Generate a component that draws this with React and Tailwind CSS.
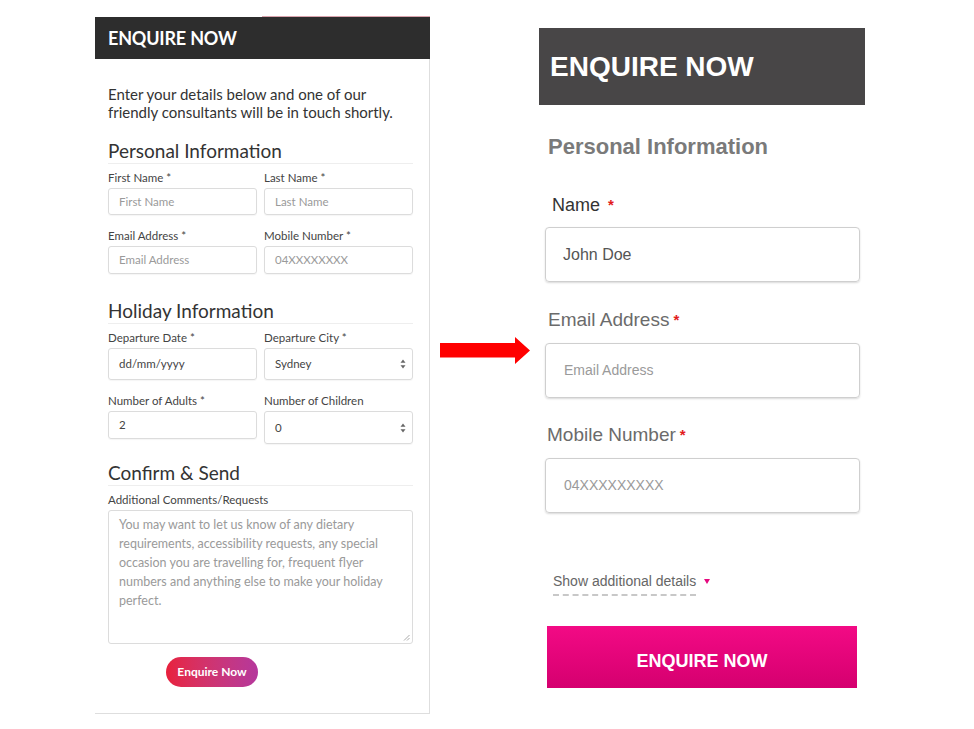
import React from "react";

const LEFT_FONT = { fontFamily: "Lato, 'Open Sans', sans-serif" };
const RIGHT_FONT = { fontFamily: "'Liberation Sans', Arial, sans-serif" };

function Caret() {
  return (
    <svg width="6" height="10" viewBox="0 0 6 10" className="shrink-0">
      <path d="M3 0.5 L5.5 3.8 H0.5 Z" fill="#666" />
      <path d="M3 9.5 L5.5 6.2 H0.5 Z" fill="#666" />
    </svg>
  );
}

function SmallField({ label, value, muted = true, select = false, h = "h-[27px]" }) {
  return (
    <div className="flex flex-col">
      <span className="text-[11.5px] leading-[14px] text-[#444]">{label}</span>
      <div
        className={`mt-[3px] ${h} flex items-center justify-between rounded-[3px] border border-[#dcdcdc] pl-[10px] pr-[6px] text-[11.5px] shadow-[0_1px_1px_rgba(0,0,0,0.04)] ${
          muted ? "text-[#9a9a9a]" : "text-[#444]"
        }`}
      >
        <span>{value}</span>
        {select && <Caret />}
      </div>
    </div>
  );
}

function SectionHeading({ children }) {
  return (
    <div className="border-b border-[#eeeeee] pb-[1px]">
      <h2 className="text-[19px] leading-[22px] text-[#333]">{children}</h2>
    </div>
  );
}

function LeftForm() {
  return (
    <div className="w-[335px] shrink-0 flex flex-col" style={LEFT_FONT}>
      <div className="flex h-px">
        <div className="w-[167px]" />
        <div className="flex-1 bg-[#d9a3ad]" />
      </div>
      <div className="h-[42px] bg-[#2d2d2d] flex items-center pl-[13px]">
        <span className="text-[18px] font-bold text-white tracking-[-0.2px]">ENQUIRE NOW</span>
      </div>
      <div className="border-r border-b border-[#dedede] pl-[13px] pr-[16px] pt-[26px] pb-[26px] flex flex-col">
        <p className="text-[15px] leading-[18px] text-[#333]">
          Enter your details below and one of our
          <br />
          friendly consultants will be in touch shortly.
        </p>

        <div className="mt-[19px]">
          <SectionHeading>Personal Information</SectionHeading>
        </div>
        <div className="mt-[7px] grid grid-cols-2 gap-x-[7px]">
          <SmallField label="First Name *" value="First Name" />
          <SmallField label="Last Name *" value="Last Name" />
        </div>
        <div className="mt-[14px] grid grid-cols-2 gap-x-[7px]">
          <SmallField label="Email Address *" value="Email Address" h="h-[28px]" />
          <SmallField label="Mobile Number *" value="04XXXXXXXX" h="h-[28px]" />
        </div>

        <div className="mt-[26px]">
          <SectionHeading>Holiday Information</SectionHeading>
        </div>
        <div className="mt-[7px] grid grid-cols-2 gap-x-[7px]">
          <SmallField label="Departure Date *" value="dd/mm/yyyy" muted={false} h="h-[32px]" />
          <SmallField label="Departure City *" value="Sydney" muted={false} select h="h-[32px]" />
        </div>
        <div className="mt-[14px] grid grid-cols-2 gap-x-[7px] items-start">
          <SmallField label="Number of Adults *" value="2" muted={false} h="h-[28px]" />
          <SmallField label="Number of Children" value="0" muted={false} select h="h-[33px]" />
        </div>

        <div className="mt-[18px]">
          <SectionHeading>Confirm &amp; Send</SectionHeading>
        </div>
        <span className="mt-[7px] text-[11.5px] leading-[14px] text-[#444]">Additional Comments/Requests</span>
        <div className="relative mt-[3px] h-[134px] rounded-[3px] border border-[#dcdcdc] px-[10px] pt-[4px] text-[12.5px] leading-[19px] text-[#9a9a9a]">
          You may want to let us know of any dietary requirements, accessibility requests, any special occasion you are
          travelling for, frequent flyer numbers and anything else to make your holiday perfect.
          <svg width="7" height="7" viewBox="0 0 7 7" className="absolute right-[2px] bottom-[2px]">
            <path d="M6.5 1 L1 6.5 M6.5 4 L4 6.5" stroke="#aaa" strokeWidth="1" />
          </svg>
        </div>
        <button className="mt-[13px] ml-[58px] h-[30px] w-[92px] rounded-full bg-gradient-to-r from-[#e8203c] to-[#b5379c] text-[12px] font-bold text-white">
          Enquire Now
        </button>
      </div>
    </div>
  );
}

function Arrow() {
  return (
    <svg width="90" height="28" viewBox="0 0 90 28" className="mt-[321px] ml-[10px] shrink-0">
      <path d="M0 6 H75 V0 L90 13.5 L75 27 V20.5 H0 Z" fill="#ff0000" />
    </svg>
  );
}

function BigField({ label, value, labelClass, mt }) {
  return (
    <div className={`flex flex-col ${mt}`}>
      <span className={labelClass}>
        {label}
        <span className="text-[#e21b1b] text-[15px] font-bold align-top ml-[4px]">*</span>
      </span>
      <div className="ml-[6px] w-[315px] h-[55px] flex items-center rounded-[4px] border border-[#cfcfcf] shadow-[0_1px_2px_rgba(0,0,0,0.15)] pl-[18px] text-[14px] text-[#9a9a9a]">
        {value}
      </div>
    </div>
  );
}

function RightForm() {
  return (
    <div className="w-[326px] shrink-0 mt-[12px] ml-[9px] flex flex-col" style={RIGHT_FONT}>
      <div className="h-[77px] bg-[#484647] flex items-center pl-[11px]">
        <span className="text-[28px] font-bold text-white">ENQUIRE NOW</span>
      </div>
      <h2 className="mt-[29px] ml-[9px] text-[22px] leading-[26px] font-bold text-[#7a7a7a]">Personal Information</h2>

      <div className="mt-[34px] flex flex-col">
        <span className="ml-[13px] mb-[11px] text-[18px] leading-[22px] text-[#333]">
          Name
          <span className="text-[#e21b1b] text-[15px] font-bold align-top ml-[8px]">*</span>
        </span>
        <div className="ml-[6px] w-[315px] h-[55px] flex items-center rounded-[4px] border border-[#cfcfcf] shadow-[0_1px_2px_rgba(0,0,0,0.15)] pl-[17px] text-[16px] text-[#555]">
          John Doe
        </div>
      </div>

      <BigField
        mt="mt-[27px]"
        label="Email Address"
        value="Email Address"
        labelClass="ml-[9px] mb-[12px] text-[19px] leading-[22px] text-[#6b6b6b]"
      />
      <BigField
        mt="mt-[26px]"
        label="Mobile Number"
        value="04XXXXXXXXX"
        labelClass="ml-[8px] mb-[12px] text-[19px] leading-[22px] text-[#6b6b6b]"
      />

      <div className="mt-[60px] ml-[14px] flex items-center">
        <span className="border-b-2 border-dashed border-[#c8c8c8] pb-[4px] text-[14px] leading-[17px] text-[#666]">
          Show additional details
        </span>
        <svg width="6" height="5" viewBox="0 0 6 5" className="ml-[8px] mb-[6px]">
          <path d="M0 0 H6 L3 5 Z" fill="#e5097f" />
        </svg>
      </div>

      <button className="mt-[30px] ml-[8px] w-[310px] h-[62px] pt-[8px] bg-gradient-to-b from-[#f30a85] to-[#d5006f] text-[18px] font-bold text-white">
        ENQUIRE NOW
      </button>
    </div>
  );
}

export default function App() {
  return (
    <div className="min-h-[729px] w-[974px] bg-white flex items-start pl-[95px] pt-[16px]">
      <LeftForm />
      <Arrow />
      <RightForm />
    </div>
  );
}
